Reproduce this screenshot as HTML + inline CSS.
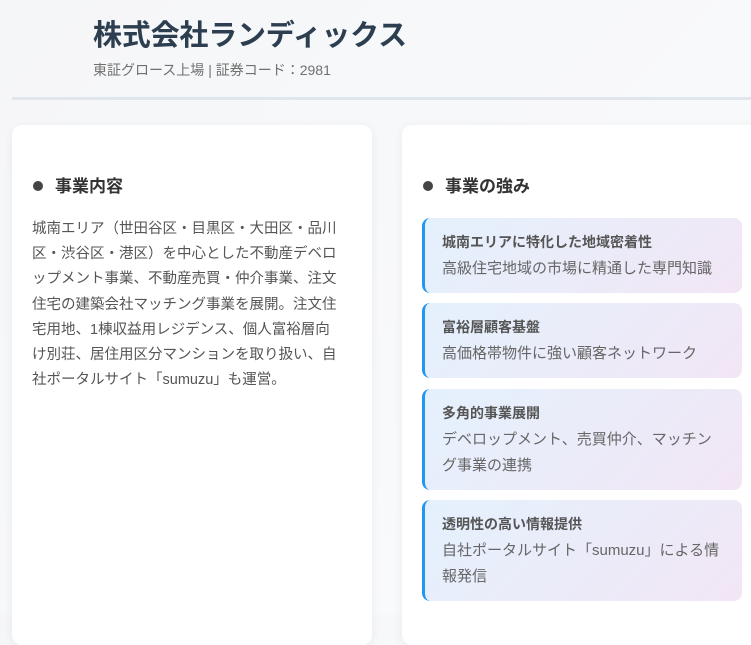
<!DOCTYPE html>
<html><head><meta charset="utf-8"><style>
*{margin:0;padding:0;box-sizing:border-box}
body{width:751px;height:615px;overflow:hidden;background:linear-gradient(135deg,#f5f6f8,#fafbfc);font-family:"Liberation Sans","Noto Sans CJK JP",sans-serif;position:relative}
h1{position:absolute;left:93px;top:12px;font-size:29px;font-weight:bold;color:#2c3e50;letter-spacing:-0.2px}
.sub{position:absolute;left:93px;top:60px;font-size:14px;color:#707070}
.line{position:absolute;left:12px;right:0;top:97px;height:3px;background:#e1e5ee}
.card{position:absolute;top:125px;background:#fff;border-radius:10px;box-shadow:0 2px 10px rgba(0,0,0,0.06);height:520px}
.c1{left:12px;width:360px}
.c2{left:402px;width:380px}
.h{position:absolute;top:172px;font-size:17px;font-weight:bold;color:#333}
.h::before{content:"";display:inline-block;width:10px;height:10px;border-radius:50%;background:#444;margin-right:12px;vertical-align:1px}
p{position:absolute;left:32px;top:217px;width:330px;font-size:14.5px;line-height:25.2px;color:#555;white-space:nowrap}
.it{position:absolute;left:422px;width:320px;border-left:3px solid #2196f3;border-radius:8px;background:linear-gradient(135deg,#e4f1fd,#f2e6f5);padding:13px 16px 0 17px}
.it b{display:block;font-size:14px;color:#555;line-height:22px;margin-bottom:3px}
.it span{display:block;font-size:15px;color:#666;line-height:26px}
</style></head><body>
<h1>株式会社ランディックス</h1>
<div class="sub">東証グロース上場 | 証券コード：2981</div>
<div class="line"></div>
<div class="card c1"></div>
<div class="card c2"></div>
<div class="h" style="left:33px">事業内容</div>
<div class="h" style="left:423px">事業の強み</div>
<p>城南エリア（世田谷区・目黒区・大田区・品川<br>区・渋谷区・港区）を中心とした不動産デベロ<br>ップメント事業、不動産売買・仲介事業、注文<br>住宅の建築会社マッチング事業を展開。注文住<br>宅用地、1棟収益用レジデンス、個人富裕層向<br>け別荘、居住用区分マンションを取り扱い、自<br>社ポータルサイト「sumuzu」も運営。</p>
<div class="it" style="top:218px;height:75px"><b>城南エリアに特化した地域密着性</b><span>高級住宅地域の市場に精通した専門知識</span></div>
<div class="it" style="top:303px;height:75px"><b>富裕層顧客基盤</b><span>高価格帯物件に強い顧客ネットワーク</span></div>
<div class="it" style="top:389px;height:101px"><b>多角的事業展開</b><span>デベロップメント、売買仲介、マッチング事業の連携</span></div>
<div class="it" style="top:500px;height:101px"><b>透明性の高い情報提供</b><span>自社ポータルサイト「sumuzu」による情報発信</span></div>
</body></html>
